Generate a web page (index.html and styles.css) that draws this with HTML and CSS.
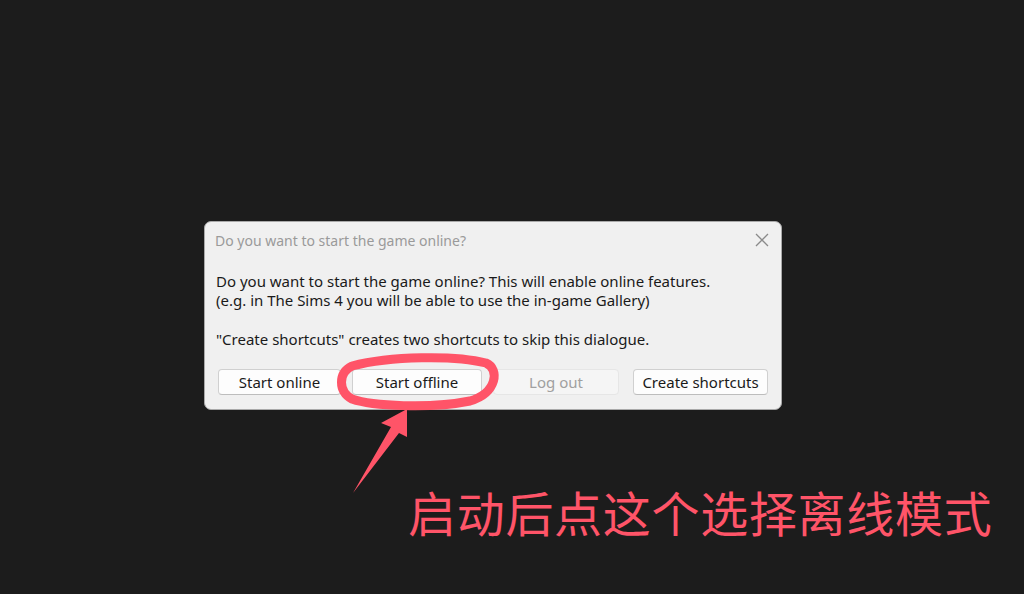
FILE: index.html
```html
<!DOCTYPE html>
<html lang="zh-CN">
<head>
    <meta charset="UTF-8">
    <title>Do you want to start the game online?</title>
    <link rel="stylesheet" href="styles.css">
</head>
<body>
    <div class="stage">
        <div class="dialog">
            <div class="titlebar">
                <span class="title">Do you want to start the game online?</span>
                <svg class="close" width="14" height="14" viewBox="0 0 14 14">
                    <path d="M1 1 L13 13 M13 1 L1 13" stroke="#8a8a8a" stroke-width="1.3" fill="none"/>
                </svg>
            </div>
            <div class="content">
                <p class="message">Do you want to start the game online? This will enable online features.<br>(e.g. in The Sims 4 you will be able to use the in-game Gallery)</p>
                <p class="message">"Create shortcuts" creates two shortcuts to skip this dialogue.</p>
                <div class="buttons">
                    <button class="btn btn-online">Start online</button>
                    <button class="btn btn-offline">Start offline</button>
                    <button class="btn btn-logout" disabled>Log out</button>
                    <button class="btn btn-shortcuts">Create shortcuts</button>
                </div>
            </div>
        </div>
        <p class="note">启动后点这个选择离线模式</p>

        <!-- hand drawn markup over the screenshot -->
        <svg class="markup" width="1024" height="594" viewBox="0 0 1024 594">
            <path d="M352 366 C 390 356, 455 355, 486 363 C 500 369, 497 393, 470 401 C 430 409, 372 406, 352 399 C 338 391, 338 373, 352 366 Z"
                  stroke="#ff5468" stroke-width="9" fill="none" stroke-linejoin="round"/>
            <polygon points="407,409 381,423 391,427 353,493 399,433 407,437" fill="#ff5468"/>
        </svg>
    </div>
</body>
</html>
```

FILE: styles.css
```css
body {
    margin: 0;
    padding: 0;
    background: #1c1c1c;
    font-family: 'Noto Sans', 'Open Sans', Arial, sans-serif;
    overflow: hidden;
}
.stage {
    position: relative;
    width: 1024px;
    height: 594px;
    padding: 221px 0 0 204px;
    box-sizing: border-box;
}
.dialog {
    width: 578px;
    height: 189px;
    box-sizing: border-box;
    background: #f0f0f0;
    border: 1px solid #a9a9a9;
    border-radius: 7px;
    overflow: hidden;
}
.titlebar {
    display: flex;
    align-items: center;
    justify-content: space-between;
    height: 36px;
    padding: 0 12px 0 10px;
}
.title {
    font-size: 14px;
    color: #9a9a9a;
}
.content {
    padding: 14px 13px 0 11px;
}
.message {
    margin: 0 0 20px;
    font-size: 15px;
    line-height: 19px;
    color: #1a1a1a;
}
.buttons {
    display: flex;
    gap: 11px;
    padding-left: 2px;
}
.btn {
    height: 26px;
    padding: 0;
    font-family: inherit;
    font-size: 15px;
    color: #1a1a1a;
    background: #fdfdfd;
    border: 1px solid #d0d0d0;
    border-bottom-color: #bdbdbd;
    border-radius: 4px;
}
.btn-online { width: 123px; }
.btn-offline { width: 130px; }
.btn-logout {
    width: 126px;
    color: #a0a0a0;
    background: #f5f5f5;
    border-color: #e6e6e6;
}
.btn-shortcuts { width: 135px; margin-left: 3px; }
.note {
    margin: 77px 0 0 204px;
    font-family: 'Noto Sans CJK SC', sans-serif;
    font-size: 48px;
    line-height: 48px;
    letter-spacing: 0.7px;
    color: #ff5468;
}
.markup {
    position: absolute;
    left: 0;
    top: 0;
    pointer-events: none;
}
```
